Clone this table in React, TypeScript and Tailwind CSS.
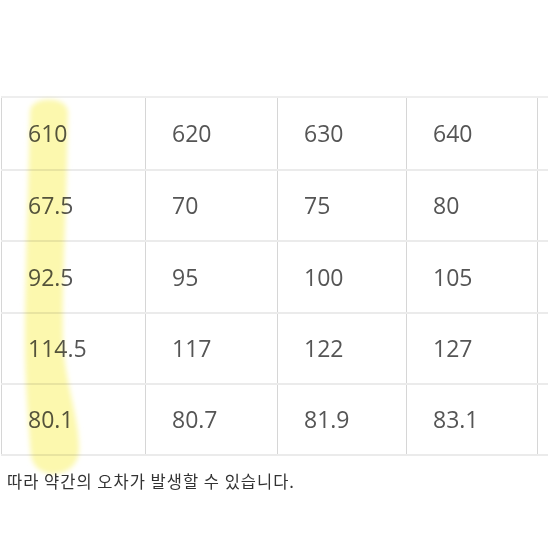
import React from "react";

const rows = [
  ["610", "620", "630", "640"],
  ["67.5", "70", "75", "80"],
  ["92.5", "95", "100", "105"],
  ["114.5", "117", "122", "127"],
  ["80.1", "80.7", "81.9", "83.1"],
];
const rowH = ["h-[73px]", "h-[71px]", "h-[72px]", "h-[71px]", "h-[71px]"];
const colW = ["w-[144px]", "w-[132px]", "w-[129px]", "w-[131px]"];

export default function App() {
  return (
    <div className="relative w-[548px] h-[548px] bg-white overflow-hidden" style={{ fontFamily: '"Open Sans", "Noto Sans", sans-serif' }}>
      <div className="pt-[96px] pl-[1px]">
        <div className="border-t-2 border-[#eeeeee]">
          {rows.map((r, i) => (
            <div key={i} className={`flex ${rowH[i]} border-b-2 border-[#ebebeb]`}>
              {r.map((c, j) => (
                <div
                  key={j}
                  className={`${colW[j]} shrink-0 border-l border-[#d6d6d6] flex items-center pl-[26px] text-[23px] text-[#555555]`}
                >
                  {c}
                </div>
              ))}
              <div className="flex-1 border-l border-[#d6d6d6]" />
            </div>
          ))}
        </div>
        <div
          className="pl-[6px] pt-[17px] text-[16.5px] tracking-[1px] text-[#333333] leading-none"
          style={{ fontFamily: '"Noto Sans CJK KR", sans-serif' }}
        >
          따라 약간의 오차가 발생할 수 있습니다.
        </div>
      </div>
      <svg className="absolute left-0 top-0 pointer-events-none mix-blend-multiply" width="548" height="548" viewBox="0 0 548 548">
        <defs>
          <filter id="b" x="-20%" y="-20%" width="140%" height="140%">
            <feGaussianBlur stdDeviation="2.5" />
          </filter>
        </defs>
        <path
          d="M 30 112 C 30 96, 67 95, 68 112 L 66 200 C 64 260, 62 300, 63 340 C 64 380, 80 420, 79 450 C 78 480, 34 482, 31 455 C 28 420, 25 380, 25 340 C 25 280, 28 200, 30 112 Z"
          fill="#fcf8ae"
          filter="url(#b)"
        />
      </svg>
    </div>
  );
}
